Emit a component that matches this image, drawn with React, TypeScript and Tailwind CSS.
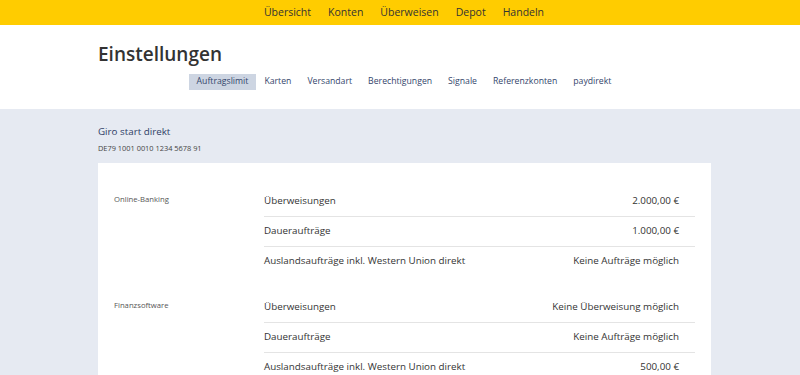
import React from "react";

const nav = ["Übersicht", "Konten", "Überweisen", "Depot", "Handeln"];
const tabs = ["Auftragslimit", "Karten", "Versandart", "Berechtigungen", "Signale", "Referenzkonten", "paydirekt"];

const groups = [
  {
    label: "Online-Banking",
    rows: [
      ["Überweisungen", "2.000,00 €"],
      ["Daueraufträge", "1.000,00 €"],
      ["Auslandsaufträge inkl. Western Union direkt", "Keine Aufträge möglich"],
    ],
  },
  {
    label: "Finanzsoftware",
    rows: [
      ["Überweisungen", "Keine Überweisung möglich"],
      ["Daueraufträge", "Keine Aufträge möglich"],
      ["Auslandsaufträge inkl. Western Union direkt", "500,00 €"],
    ],
  },
];

export default function App() {
  return (
    <div className="min-h-screen bg-[#e6eaf2] font-['Open_Sans',sans-serif]">
      <header className="h-[25px] bg-[#ffcc00] flex items-center justify-center gap-[17px] pl-[8px] text-[10.5px] text-[#333]">
        {nav.map((n) => (
          <span key={n}>{n}</span>
        ))}
      </header>

      <section className="bg-white h-[84px] pt-[15px]">
        <h1 className="pl-[98px] text-[19px] font-semibold text-[#333] leading-[28px]">Einstellungen</h1>
        <nav className="flex justify-center mt-[6px] pl-[8px]">
          {tabs.map((t, i) => (
            <span
              key={t}
              className={`px-2 h-[16px] flex items-center text-[8.7px] text-[#34456b] ${
                i === 0 ? "bg-[#cdd5e2]" : ""
              }`}
            >
              {t}
            </span>
          ))}
        </nav>
      </section>

      <main className="ml-[98px] w-[613px] pt-[15px]">
        <p className="text-[9.8px] text-[#2e3d66] leading-[16px]">Giro start direkt</p>
        <p className="text-[7.4px] text-[#444] leading-[12px] mt-[2px]">DE79 1001 0010 1234 5678 91</p>

        <div className="bg-white mt-[9px] pt-[23px] px-4 pb-4 flex flex-col gap-4">
          {groups.map((g) => (
            <div key={g.label} className="flex">
              <div className="w-[150px] text-[7.7px] text-[#555] pt-[8px]">{g.label}</div>
              <div className="flex-1">
                {g.rows.map(([k, v], i) => (
                  <div
                    key={k}
                    className={`h-[30px] flex items-center justify-between pr-4 text-[9.8px] text-[#333] ${
                      i > 0 ? "border-t border-[#e4e4e4]" : ""
                    }`}
                  >
                    <span>{k}</span>
                    <span>{v}</span>
                  </div>
                ))}
              </div>
            </div>
          ))}
        </div>
      </main>
    </div>
  );
}
